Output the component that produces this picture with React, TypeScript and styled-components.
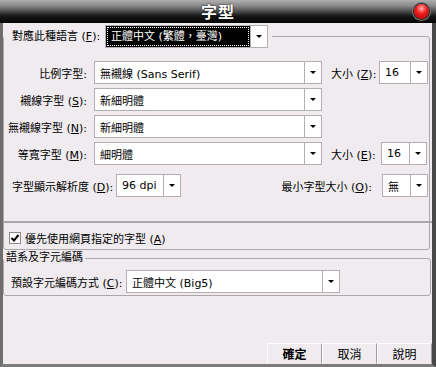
import React from 'react';
import styled, { createGlobalStyle } from 'styled-components';

const Global = createGlobalStyle`
  html, body { margin: 0; padding: 0; background: #efebef; }
  body {
    font-family: "DejaVu Sans", "Noto Sans CJK TC", sans-serif;
    font-size: 11px;
    color: #000;
  }
  * { box-sizing: border-box; }
`;

const Window = styled.div`
  width: 436px;
  height: 367px;
  display: flex;
  flex-direction: column;
  overflow: hidden;
`;

const TitleBar = styled.div`
  height: 23px;
  flex: none;
  position: relative;
  display: flex;
  align-items: center;
  justify-content: center;
  background: linear-gradient(180deg, #b0b0b0 0%, #8a8a8a 25%, #4a4a4a 50%, #161616 70%, #050505 100%);
`;

const Title = styled.div`
  color: #fff;
  font-weight: bold;
  font-size: 16px;
  font-family: "Noto Sans CJK TC", sans-serif;
  letter-spacing: 1px;
  text-shadow: 0 0 2px #000;
  line-height: 23px;
`;

const CloseBtn = styled.div`
  position: absolute;
  right: 7px;
  top: 4px;
  width: 15px;
  height: 15px;
  border-radius: 50%;
  background: radial-gradient(circle at 50% 30%, #ffb0b0 0%, #f02020 40%, #a00000 100%);
  box-shadow: 0 0 0 1px #2a2a2a, 0 0 0 2px #777;
`;

const Body = styled.div`
  flex: 1;
  display: flex;
  flex-direction: column;
  background: #efebef;
  border-left: 3px solid #6e6e6e;
  border-right: 4px solid #484848;
  border-bottom: 3px solid #7b7b7b;
`;

const Group = styled.fieldset<{ $mr: number; $mt: number }>`
  margin: ${(p) => p.$mt}px ${(p) => p.$mr}px 0 0;
  padding: 0;
  border: 1px solid #aba7ab;
  border-radius: 3px;
  min-width: 0;
`;

const Legend = styled.legend<{ $pl: number; $pr: number }>`
  margin-left: 0;
  padding: 0 ${(p) => p.$pr}px 0 ${(p) => p.$pl}px;
  display: flex;
  align-items: center;
  line-height: 16px;
`;

const Label = styled.span<{ $w?: number }>`
  display: inline-block;
  flex: none;
  white-space: nowrap;
  ${(p) => (p.$w ? `width: ${p.$w}px;` : '')}
`;

const SelectBox = styled.div<{ $w: number }>`
  width: ${(p) => p.$w}px;
  height: 23px;
  flex: none;
  display: flex;
  border: 1px solid #b2aeb2;
  background: #fff;
`;

const SelectValue = styled.div<{ $focused?: boolean }>`
  flex: 1;
  display: flex;
  align-items: center;
  padding-left: 5px;
  white-space: nowrap;
  overflow: hidden;
  background: ${(p) => (p.$focused ? '#000' : '#fff')};
  color: ${(p) => (p.$focused ? '#fff' : '#000')};
  outline: ${(p) => (p.$focused ? '1px dotted #fff' : 'none')};
  outline-offset: -2px;
`;

const SelectArrow = styled.div`
  width: 17px;
  flex: none;
  border-left: 1px solid #b2aeb2;
  display: flex;
  align-items: center;
  justify-content: center;
  &::after {
    content: '';
    border-left: 3px solid transparent;
    border-right: 3px solid transparent;
    border-top: 3px solid #000;
  }
`;

const Select: React.FC<{ w: number; value: string; focused?: boolean }> = ({ w, value, focused }) => (
  <SelectBox $w={w}>
    <SelectValue $focused={focused}>{value}</SelectValue>
    <SelectArrow />
  </SelectBox>
);

const FontGrid = styled.div`
  margin-top: 13px;
  display: grid;
  grid-template-columns: 90px 228px 57px 49px;
  grid-auto-rows: 23px;
  row-gap: 4px;
  align-items: center;
`;

const GridLabel = styled.span`
  text-align: right;
  padding-right: 7px;
  white-space: nowrap;
`;

const SizeLabel = styled.span`
  padding-left: 9px;
  white-space: nowrap;
`;

const SizeCell = styled.div<{ $ml: number }>`
  display: flex;
  margin-left: ${(p) => p.$ml}px;
`;

const Row = styled.div<{ $mt: number; $pl: number; $mb?: number }>`
  margin-top: ${(p) => p.$mt}px;
  margin-bottom: ${(p) => p.$mb || 0}px;
  padding-left: ${(p) => p.$pl}px;
  display: flex;
  align-items: center;
`;

const RightPart = styled.div`
  margin-left: auto;
  margin-right: 1px;
  display: flex;
  align-items: center;
  gap: 10px;
`;

const Separator = styled.div`
  margin: 24px -3px 0 0;
  height: 2px;
  background: #aaa6aa;
`;

const CheckRow = styled.div`
  margin: 9px 0 5px 5px;
  height: 12px;
  display: flex;
  align-items: center;
  gap: 4px;
`;

const CheckBox = styled.div`
  width: 12px;
  height: 12px;
  flex: none;
  border: 1px solid #8c888c;
  background: #fff;
  display: flex;
  align-items: center;
  justify-content: center;
`;

const Spacer = styled.div`
  flex: 1;
`;

const ButtonRow = styled.div`
  display: flex;
  justify-content: flex-end;
`;

const Button = styled.div<{ $bold?: boolean }>`
  width: 55px;
  height: 21px;
  display: flex;
  align-items: center;
  justify-content: center;
  background: #efebef;
  border: 1px solid;
  border-color: #fff #a09ca0 #efebef #fff;
  font-weight: ${(p) => (p.$bold ? 'bold' : 'normal')};
  font-size: 12px;
`;

const M: React.FC<{ c: string }> = ({ c }) => (
  <>
    {' ('}
    <u>{c}</u>
    {'):'}
  </>
);

export default function App() {
  return (
    <Window>
      <Global />
      <TitleBar>
        <Title>字型</Title>
        <CloseBtn />
      </TitleBar>
      <Body>
        <Group $mr={2} $mt={2}>
          <Legend $pl={8} $pr={4}>
            <Label $w={93}>
              對應此種語言<M c="F" />
            </Label>
            <Select w={163} value="正體中文 (繁體，臺灣)" focused />
          </Legend>
          <FontGrid>
            <GridLabel>比例字型:</GridLabel>
            <Select w={228} value="無襯線 (Sans Serif)" />
            <SizeLabel>
              大小<M c="Z" />
            </SizeLabel>
            <SizeCell $ml={0}>
              <Select w={49} value="16" />
            </SizeCell>

            <GridLabel>
              襯線字型<M c="S" />
            </GridLabel>
            <Select w={228} value="新細明體" />
            <span />
            <span />

            <GridLabel>
              無襯線字型<M c="N" />
            </GridLabel>
            <Select w={228} value="新細明體" />
            <span />
            <span />

            <GridLabel>
              等寬字型<M c="M" />
            </GridLabel>
            <Select w={228} value="細明體" />
            <SizeLabel>
              大小<M c="E" />
            </SizeLabel>
            <SizeCell $ml={2}>
              <Select w={46} value="16" />
            </SizeCell>
          </FontGrid>
          <Row $mt={9} $pl={8}>
            <Label $w={104}>
              字型顯示解析度<M c="D" />
            </Label>
            <Select w={65} value="96 dpi" />
            <RightPart>
              <Label>
                最小字型大小<M c="O" />
              </Label>
              <Select w={46} value="無" />
            </RightPart>
          </Row>
          <Separator />
          <CheckRow>
            <CheckBox>
              <svg width="10" height="10" viewBox="0 0 10 10">
                <path d="M1.5 5 L4 7.5 L8.5 2" stroke="#000" strokeWidth="2" fill="none" />
              </svg>
            </CheckBox>
            <span>
              優先使用網頁指定的字型 (<u>A</u>)
            </span>
          </CheckRow>
        </Group>
        <Group $mr={1} $mt={0}>
          <Legend $pl={2} $pr={2}>
            語系及字元編碼
          </Legend>
          <Row $mt={4} $pl={7} $mb={2}>
            <Label $w={115}>
              預設字元編碼方式<M c="C" />
            </Label>
            <Select w={214} value="正體中文 (Big5)" />
          </Row>
        </Group>
        <Spacer />
        <ButtonRow>
          <Button $bold>確定</Button>
          <Button>取消</Button>
          <Button>說明</Button>
        </ButtonRow>
      </Body>
    </Window>
  );
}
